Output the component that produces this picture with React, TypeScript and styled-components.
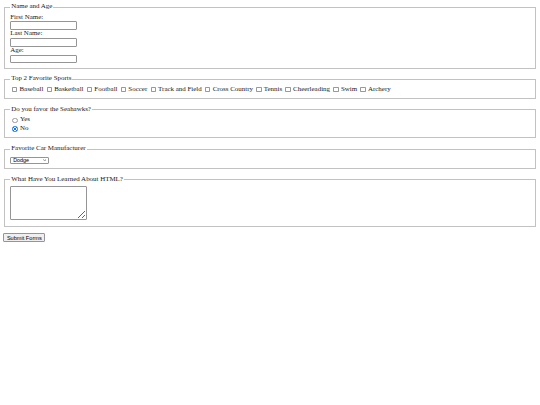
import React, { useState } from 'react';
import styled, { createGlobalStyle } from 'styled-components';

const GlobalStyle = createGlobalStyle`
  html, body {
    margin: 0;
    padding: 0;
    background: #ffffff;
  }
  body {
    padding: 3.4px;
    font-family: 'Liberation Serif', 'Times New Roman', serif;
    font-size: 6.95px;
    line-height: 7.8px;
    color: #1a1a1a;
  }
  form {
    margin: 0;
  }
`;

const Group = styled.fieldset`
  margin: 0 0.8px 6.9px;
  padding: 2.4px 5px 4.2px;
  border: 1px solid #c2c2c2;
  min-width: 0;
`;

const Legend = styled.legend`
  padding: 0 1px;
  line-height: 7.8px;
`;

const Label = styled.label`
  display: block;
  line-height: 7.8px;
`;

const TextInput = styled.input`
  display: block;
  box-sizing: border-box;
  width: 67px;
  height: 8.8px;
  margin: 0;
  padding: 0 1px;
  border: 1px solid #959595;
  border-radius: 1px;
  font-size: 5.6px;
  font-family: 'Liberation Sans', Arial, sans-serif;
`;

const Row = styled.div`
  display: flex;
  flex-wrap: wrap;
  align-items: center;
  height: 8.2px;
`;

const Choice = styled.label<{ $stacked?: boolean }>`
  display: ${(p) => (p.$stacked ? 'flex' : 'inline-flex')};
  align-items: center;
  height: ${(p) => (p.$stacked ? '8.6px' : '8.2px')};
  margin-right: 1.6px;
  white-space: nowrap;
`;

const Check = styled.input`
  appearance: none;
  box-sizing: border-box;
  flex: none;
  width: 5.4px;
  height: 5.4px;
  margin: 0 2.2px 0 1.7px;
  border: 0.8px solid #9a9a9a;
  border-radius: 0.8px;
  background: #fff;
`;

const Radio = styled.input`
  appearance: none;
  box-sizing: border-box;
  flex: none;
  width: 5.5px;
  height: 5.5px;
  margin: 0 2.2px 0 2px;
  border: 0.8px solid #9a9a9a;
  border-radius: 50%;
  background: #fff;

  &:checked {
    border-color: #1a73e8;
    background: radial-gradient(circle, #1a73e8 0 1.2px, #ffffff 1.3px 1.7px, #1a73e8 1.8px);
  }
`;

const SelectWrap = styled.div`
  position: relative;
  width: 38.8px;
  margin-top: 1.4px;
`;

const Select = styled.select`
  appearance: none;
  display: block;
  box-sizing: border-box;
  width: 100%;
  height: 6.8px;
  padding: 0 0 0 2px;
  margin: 0;
  font-size: 5.4px;
  line-height: 5px;
  font-family: 'Liberation Sans', Arial, sans-serif;
  border: 0.8px solid #959595;
  border-radius: 1px;
  background: #fff;
  color: #000;
`;

const Chevron = styled.svg`
  position: absolute;
  right: 3px;
  top: 2px;
  width: 3.4px;
  height: 2.4px;
  pointer-events: none;
`;

const TextArea = styled.textarea`
  display: block;
  box-sizing: border-box;
  width: 77px;
  height: 34px;
  margin: 0.4px 0 1px;
  padding: 1px;
  border: 1px solid #959595;
  border-radius: 1px;
  font-size: 5.6px;
  resize: both;
`;

const SubmitButton = styled.button`
  display: block;
  box-sizing: border-box;
  height: 8.4px;
  padding: 0 2.5px;
  margin: 0;
  font-size: 5.6px;
  line-height: 6px;
  font-family: 'Liberation Sans', Arial, sans-serif;
  border: 0.8px solid #959595;
  border-radius: 1px;
  background: #efefef;
  color: #000;
`;

const sports = [
  'Baseball',
  'Basketball',
  'Football',
  'Soccer',
  'Track and Field',
  'Cross Country',
  'Tennis',
  'Cheerleading',
  'Swim',
  'Archery',
];

const App: React.FC = () => {
  const [seahawks, setSeahawks] = useState('no');

  return (
    <>
      <GlobalStyle />
      <form onSubmit={(e) => e.preventDefault()}>
        <Group>
          <Legend>Name and Age</Legend>
          <Label htmlFor='first'>First Name:</Label>
          <TextInput id='first' type='text' />
          <Label htmlFor='last'>Last Name:</Label>
          <TextInput id='last' type='text' />
          <Label htmlFor='age'>Age:</Label>
          <TextInput id='age' type='text' />
        </Group>

        <Group>
          <Legend>Top 2 Favorite Sports</Legend>
          <Row>
            {sports.map((s) => (
              <Choice key={s}>
                <Check type='checkbox' name='sports' value={s} />
                {s}
              </Choice>
            ))}
          </Row>
        </Group>

        <Group>
          <Legend>Do you favor the Seahawks?</Legend>
          <Choice $stacked>
            <Radio
              type='radio'
              name='seahawks'
              checked={seahawks === 'yes'}
              onChange={() => setSeahawks('yes')}
            />
            Yes
          </Choice>
          <Choice $stacked>
            <Radio
              type='radio'
              name='seahawks'
              checked={seahawks === 'no'}
              onChange={() => setSeahawks('no')}
            />
            No
          </Choice>
        </Group>

        <Group>
          <Legend>Favorite Car Manufacturer</Legend>
          <SelectWrap>
            <Select defaultValue='Dodge'>
              <option>Dodge</option>
              <option>Ford</option>
              <option>Chevrolet</option>
              <option>Toyota</option>
            </Select>
            <Chevron viewBox='0 0 10 7'>
              <path d='M1 1.5 L5 5.5 L9 1.5' fill='none' stroke='#222' strokeWidth='1.8' />
            </Chevron>
          </SelectWrap>
        </Group>

        <Group>
          <Legend>What Have You Learned About HTML?</Legend>
          <TextArea />
        </Group>

        <SubmitButton type='submit'>Submit Forms</SubmitButton>
      </form>
    </>
  );
};

export default App;
